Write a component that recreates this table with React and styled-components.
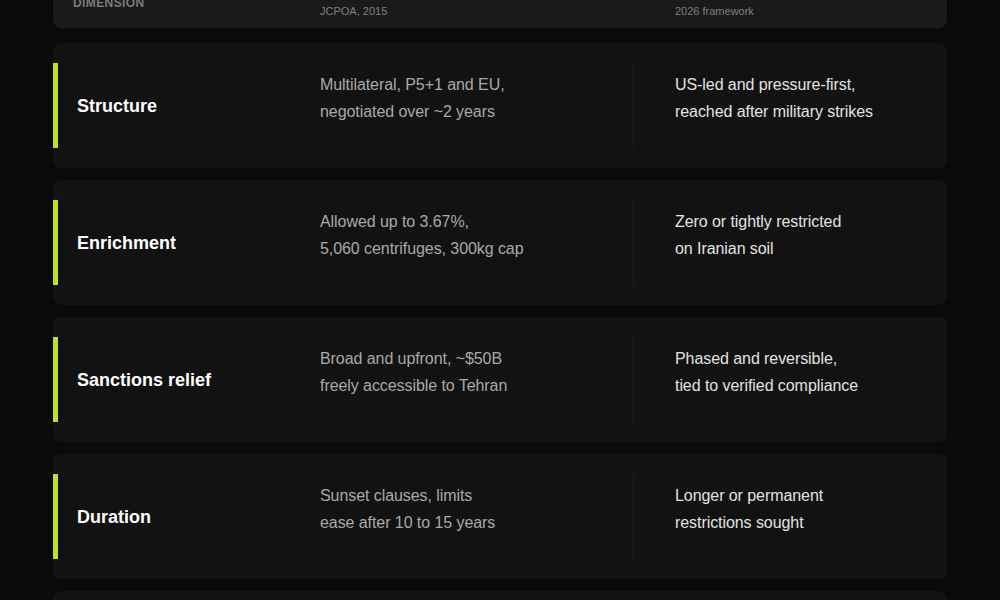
import React from "react";
import styled, { createGlobalStyle } from "styled-components";

const GlobalStyle = createGlobalStyle`
  html, body {
    margin: 0;
    padding: 0;
    background: #0a0a0a;
    font-family: "Liberation Sans", Arial, sans-serif;
    overflow: hidden;
  }
`;

const Page = styled.div`
  width: 1000px;
  height: 600px;
  overflow: hidden;
  box-sizing: border-box;
  padding: 0 53px;
`;

const Table = styled.div`
  display: flex;
  flex-direction: column;
  gap: 12px;
  margin-top: -32px;
`;

const HeaderCard = styled.div`
  display: grid;
  grid-template-columns: 267px 313px 314px;
  align-items: end;
  min-height: 60px;
  box-sizing: border-box;
  padding-bottom: 10px;
  margin-bottom: 3px;
  background: #1a1a1a;
  border-radius: 0 0 8px 8px;
`;

const HeaderLabel = styled.div`
  padding: 0 0 8px 20px;
  font-size: 12px;
  line-height: 14px;
  font-weight: 700;
  letter-spacing: 0.4px;
  text-transform: uppercase;
  color: #7a7a7a;
`;

const HeaderSub = styled.div`
  padding-left: ${(p) => (p.divided ? "42px" : "0")};
  font-size: 11px;
  line-height: 14px;
  color: #808080;
`;

const RowCard = styled.div`
  display: grid;
  grid-template-columns: 267px 313px 314px;
  padding: 20px 0;
  background: #121212;
  border-radius: 8px;
`;

const Label = styled.div`
  display: flex;
  align-items: center;
  border-left: 5px solid #c4e01b;
  padding: 2px 0 0 19px;
  box-sizing: border-box;
  font-size: 18px;
  font-weight: 700;
  color: #ffffff;
  min-height: 85px;
`;

const Cell = styled.div`
  padding: 9px 0 0 ${(p) => (p.divided ? "41px" : "0")};
  border-left: ${(p) => (p.divided ? "1px solid #1f1f1f" : "none")};
  margin: -1px 0 -2px;
  font-size: 16px;
  line-height: 27px;
  letter-spacing: -0.07px;
  color: ${(p) => (p.divided ? "#e2e2e2" : "#a9a9a9")};
`;

const rows = [
  {
    label: "Structure",
    old: ["Multilateral, P5+1 and EU,", "negotiated over ~2 years"],
    now: ["US-led and pressure-first,", "reached after military strikes"],
  },
  {
    label: "Enrichment",
    old: ["Allowed up to 3.67%,", "5,060 centrifuges, 300kg cap"],
    now: ["Zero or tightly restricted", "on Iranian soil"],
  },
  {
    label: "Sanctions relief",
    old: ["Broad and upfront, ~$50B", "freely accessible to Tehran"],
    now: ["Phased and reversible,", "tied to verified compliance"],
  },
  {
    label: "Duration",
    old: ["Sunset clauses, limits", "ease after 10 to 15 years"],
    now: ["Longer or permanent", "restrictions sought"],
  },
  {
    label: "Verification",
    old: ["IAEA inspections under", "the Additional Protocol"],
    now: ["Expanded access to", "military and undeclared sites"],
  },
];

const Lines = ({ lines }) =>
  lines.map((line, i) => (
    <React.Fragment key={i}>
      {line}
      {i < lines.length - 1 && <br />}
    </React.Fragment>
  ));

export default function App() {
  return (
    <>
      <GlobalStyle />
      <Page>
        <Table>
          <HeaderCard>
            <HeaderLabel>Dimension</HeaderLabel>
            <HeaderSub>JCPOA, 2015</HeaderSub>
            <HeaderSub divided>2026 framework</HeaderSub>
          </HeaderCard>
          {rows.map((row) => (
            <RowCard key={row.label}>
              <Label>{row.label}</Label>
              <Cell>
                <Lines lines={row.old} />
              </Cell>
              <Cell divided>
                <Lines lines={row.now} />
              </Cell>
            </RowCard>
          ))}
        </Table>
      </Page>
    </>
  );
}
